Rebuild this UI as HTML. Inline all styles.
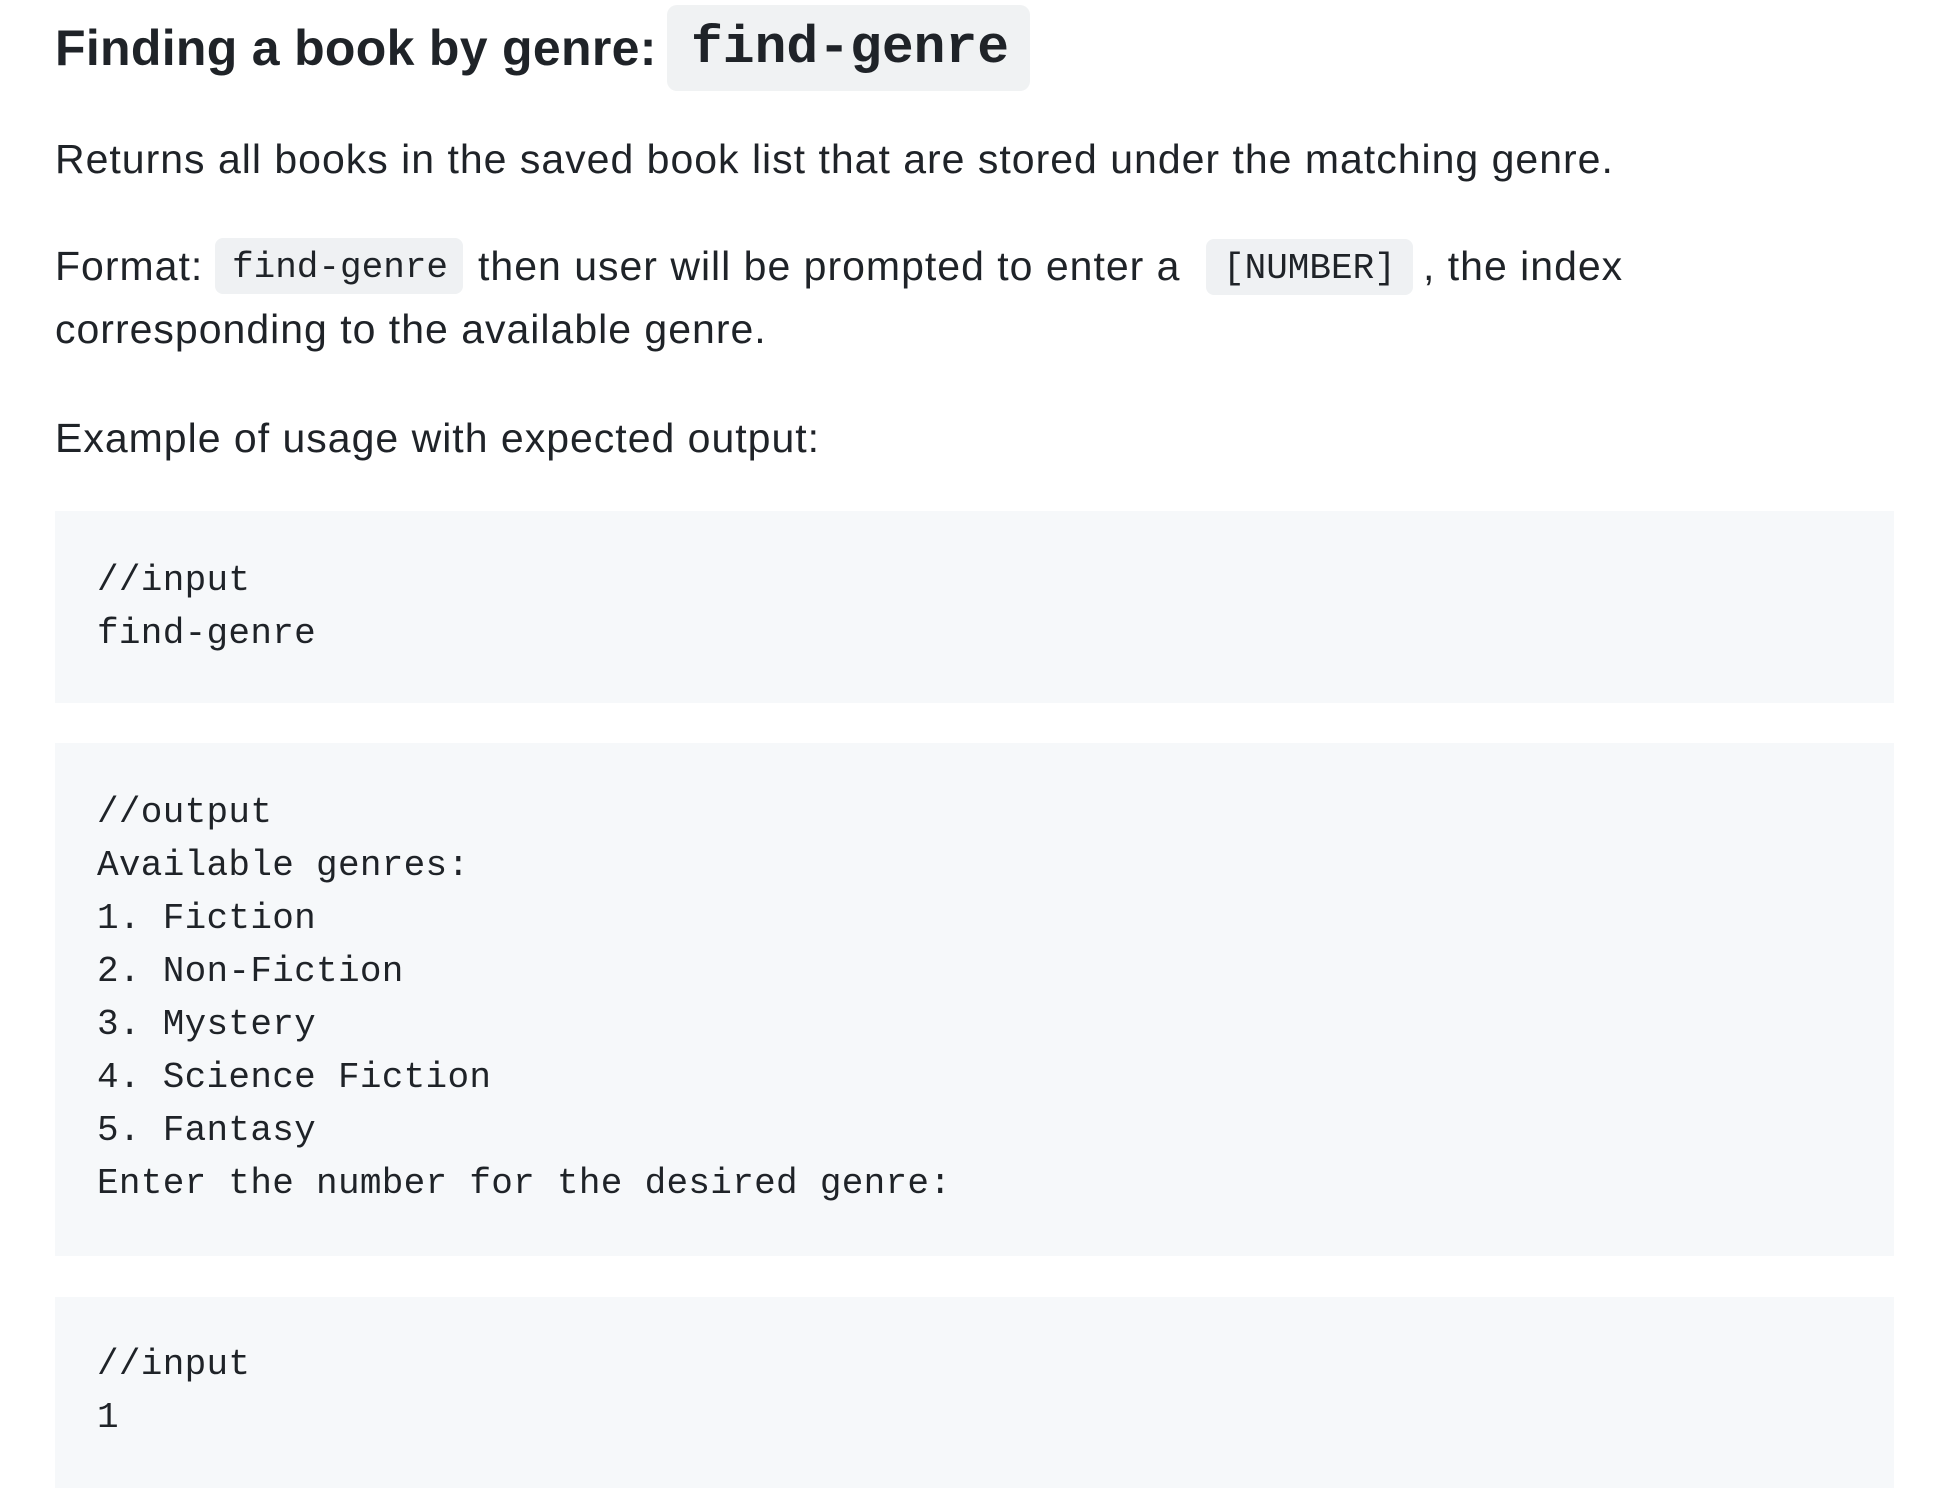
<!DOCTYPE html>
<html><head><meta charset="utf-8"><style>
html,body{margin:0;padding:0;background:#fff;width:1942px;height:1502px;overflow:hidden;position:relative;color:#1f2328;}
.s{position:absolute;font-family:"Liberation Sans",sans-serif;font-size:41px;letter-spacing:1px;line-height:40px;white-space:nowrap;}
.h{position:absolute;font-family:"Liberation Sans",sans-serif;font-size:50px;font-weight:bold;line-height:50px;white-space:nowrap;left:55px;top:23px;letter-spacing:0.3px;}
.m{font-family:"Liberation Mono",monospace;}
.pill{position:absolute;background:#eff1f3;border-radius:8px;}
.blk{position:absolute;left:55px;width:1839px;background:#f6f8fa;}
.code{position:absolute;left:97px;font-family:"Liberation Mono",monospace;font-size:36px;letter-spacing:0.3px;line-height:53px;white-space:pre;}
</style></head><body>
<div class="h">Finding a book by genre:</div>
<div class="pill" style="left:667px;top:5px;width:363px;height:86px;background:#f0f2f3;border-radius:10px"></div>
<div class="m" style="position:absolute;left:691px;top:22px;font-size:53px;font-weight:bold;line-height:53px">find-genre</div>

<div class="s" style="left:55px;top:139px">Returns all books in the saved book list that are stored under the matching genre.</div>

<div class="s" style="left:55px;top:246px">Format:</div>
<div class="pill" style="left:215px;top:238px;width:248px;height:56px"></div>
<div class="m" style="position:absolute;left:232px;top:250px;font-size:36px;line-height:36px">find-genre</div>
<div class="s" style="left:478px;top:246px">then user will be prompted to enter a</div>
<div class="pill" style="left:1206px;top:239px;width:207px;height:56px"></div>
<div class="m" style="position:absolute;left:1223px;top:251px;font-size:36px;line-height:36px">[NUMBER]</div>
<div class="s" style="left:1423px;top:246px">, the index</div>
<div class="s" style="left:55px;top:309px">corresponding to the available genre.</div>

<div class="s" style="left:55px;top:418px">Example of usage with expected output:</div>

<div class="blk" style="top:511px;height:192px"></div>
<div class="code" style="top:554px">//input
find-genre</div>

<div class="blk" style="top:743px;height:513px"></div>
<div class="code" style="top:786px">//output
Available genres:
1. Fiction
2. Non-Fiction
3. Mystery
4. Science Fiction
5. Fantasy
Enter the number for the desired genre:</div>

<div class="blk" style="top:1297px;height:191px"></div>
<div class="code" style="top:1338px">//input
1</div>
</body></html>
